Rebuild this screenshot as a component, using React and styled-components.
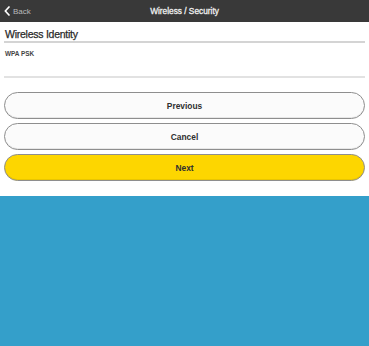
import React from "react";
import styled, { createGlobalStyle } from "styled-components";

const Global = createGlobalStyle`
  html, body {
    margin: 0;
    padding: 0;
    height: 100%;
  }
  body {
    font-family: "Liberation Sans", Arial, sans-serif;
  }
  #root {
    height: 100%;
  }
`;

const Page = styled.div`
  display: flex;
  flex-direction: column;
  min-height: 100vh;
  background: #fff;
`;

const Header = styled.div`
  height: 22px;
  background: #393939;
  display: flex;
  align-items: center;
  position: relative;
  flex-shrink: 0;
`;

const BackButton = styled.div`
  display: flex;
  align-items: center;
  gap: 3px;
  padding-left: 4px;
  color: #b9b9b9;
  font-size: 8px;
  z-index: 1;
`;

const HeaderTitle = styled.div`
  position: absolute;
  left: 0;
  right: 0;
  text-align: center;
  color: #f0f0f0;
  font-size: 8.3px;
  -webkit-text-stroke: 0.3px #f0f0f0;
`;

const Body = styled.div`
  padding: 7px 4px 15px 4px;
`;

const SectionTitle = styled.div`
  font-size: 10.5px;
  line-height: 11px;
  letter-spacing: -0.25px;
  color: #2a2a2a;
  -webkit-text-stroke: 0.25px #2a2a2a;
  padding-left: 1px;
  padding-bottom: 1px;
  border-bottom: 2px solid #d4d4d4;
`;

const FieldLabel = styled.div`
  margin-top: 7px;
  font-size: 6.4px;
  line-height: 8px;
  font-weight: bold;
  color: #444;
  padding-left: 1px;
`;

const FieldInput = styled.div`
  height: 18px;
  border-bottom: 2px solid #e2e2e2;
`;

const Buttons = styled.div`
  margin-top: 14px;
  display: flex;
  flex-direction: column;
  gap: 4px;
`;

const Button = styled.div`
  height: 27px;
  box-sizing: border-box;
  border-radius: 14px;
  border: 1px solid #8e8e8e;
  box-shadow: inset 0 -1px 0 rgba(0, 0, 0, 0.08);
  background: ${(p) => (p.$primary ? "#fdd600" : "#fbfbfb")};
  display: flex;
  align-items: center;
  justify-content: center;
  font-size: 8.4px;
  font-weight: bold;
  color: #2f2f2f;
`;

const Footer = styled.div`
  flex: 1;
  background: #349fca;
`;

const Chevron = () => (
  <svg width="6" height="10" viewBox="0 0 6 10">
    <polyline
      points="5,1 1.3,5 5,9"
      fill="none"
      stroke="#fff"
      strokeWidth="1.7"
      strokeLinecap="round"
      strokeLinejoin="round"
    />
  </svg>
);

export default function App() {
  return (
    <Page>
      <Global />
      <Header>
        <BackButton>
          <Chevron />
          Back
        </BackButton>
        <HeaderTitle>Wireless / Security</HeaderTitle>
      </Header>
      <Body>
        <SectionTitle>Wireless Identity</SectionTitle>
        <FieldLabel>WPA PSK</FieldLabel>
        <FieldInput />
        <Buttons>
          <Button>Previous</Button>
          <Button>Cancel</Button>
          <Button $primary>Next</Button>
        </Buttons>
      </Body>
      <Footer />
    </Page>
  );
}
